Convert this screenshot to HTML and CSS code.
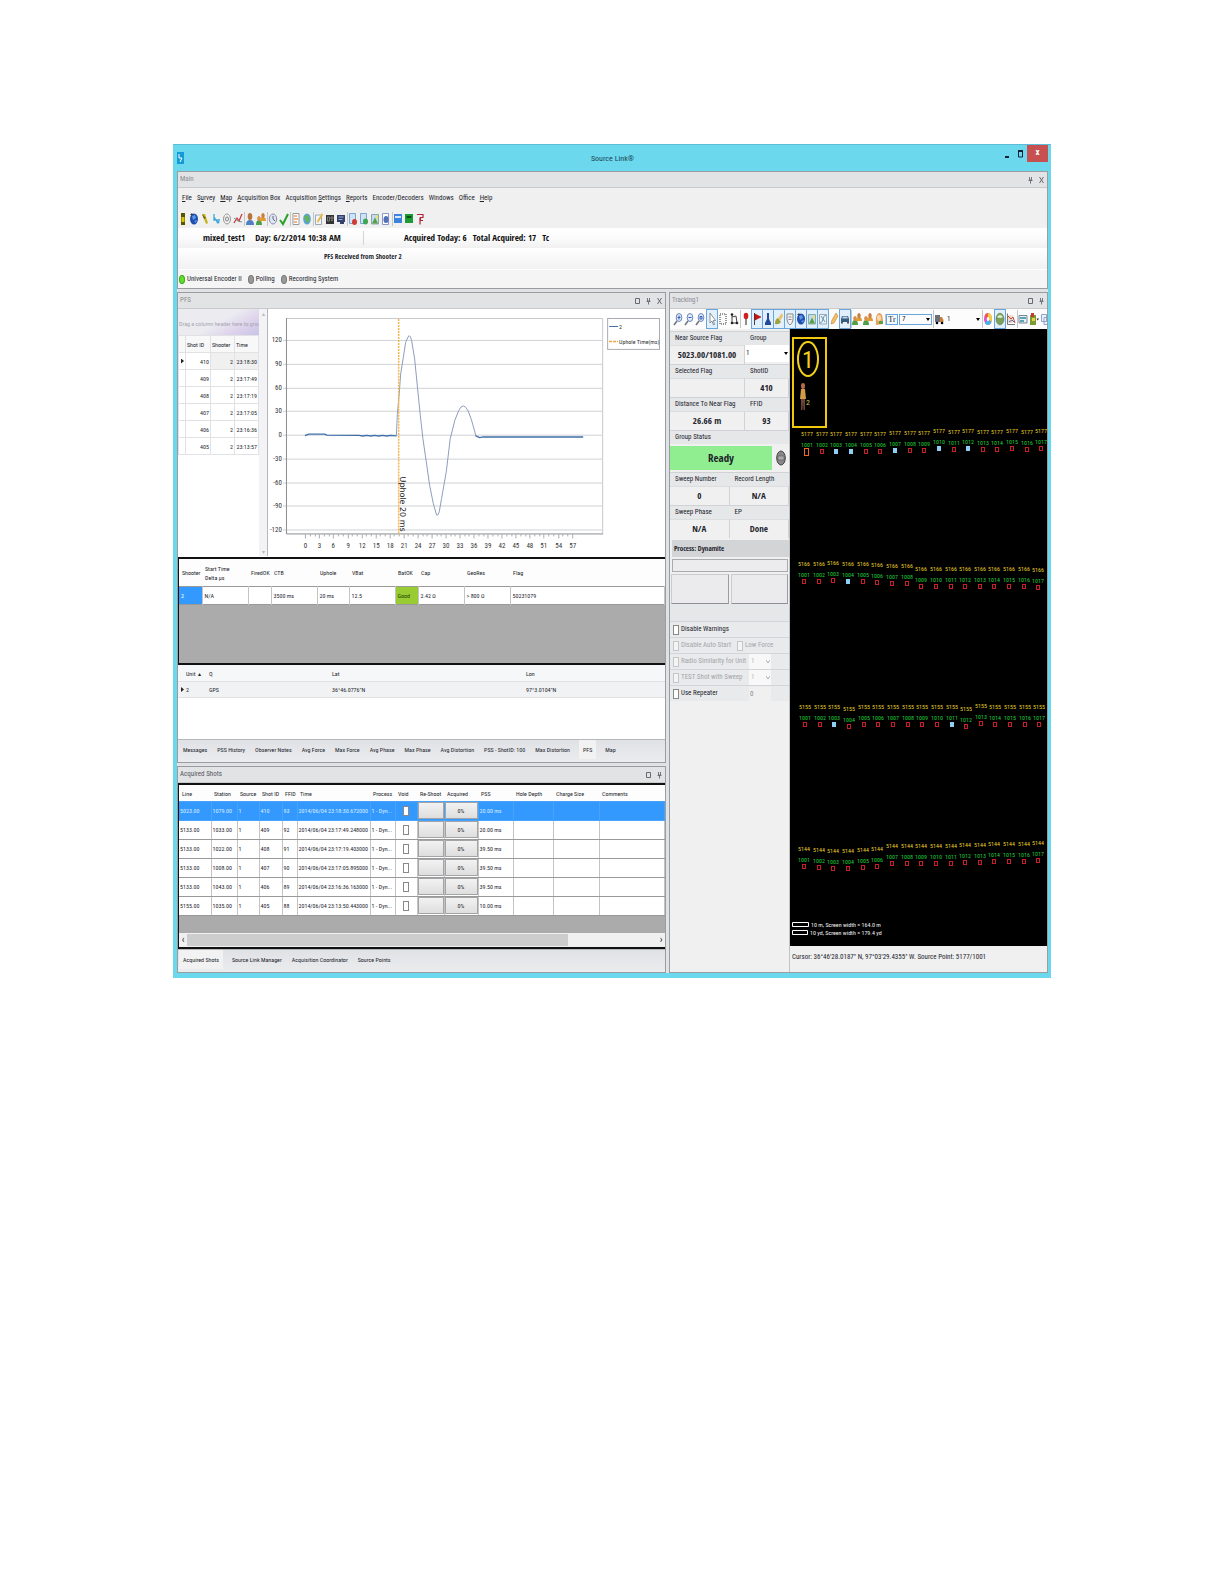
FILE: index.html
```html
<!DOCTYPE html>
<html lang="en">
<head>
<meta charset="utf-8">
<meta name="viewport" content="width=device-width, initial-scale=1">
<title>Source Link</title>
<link rel="stylesheet" href="styles.css">
</head>
<body>
<svg class="sprite" aria-hidden="true">
  <symbol id="c-max" viewBox="0 0 5 8"><path d="M.5 1.500h4v5h-4z" fill="none" stroke="#666a70"/></symbol>
  <symbol id="c-pin" viewBox="0 0 5 8"><path d="M1.500 1v3h2V1M.5 4.500h4M2.500 5v2.500" fill="none" stroke="#666a70" stroke-width=".9"/></symbol>
  <symbol id="c-x" viewBox="0 0 5 8"><path d="M.5 1l4 6M4.500 1l-4 6" fill="none" stroke="#666a70"/></symbol>
  <symbol id="i-battery" viewBox="0 0 10 14"><path d="M3 1h4v12H3z" fill="#5b5400"/><path d="M3.500 5h3v5h-3z" fill="#d8c400"/></symbol>
  <symbol id="i-globe" viewBox="0 0 10 14"><ellipse cx="5" cy="7" rx="4" ry="5.500" fill="#1f4fae"/><path d="M3 4l3-1 1 3-3 2zM5 9l3-1-1 3z" fill="#5f96e6"/><path d="M1 3l2-2 1 2z" fill="#333"/></symbol>
  <symbol id="i-marker" viewBox="0 0 10 14"><path d="M2 2l3 0 3 9-2 1z" fill="#c9b21a"/><path d="M2 2l2 5 2-1z" fill="#6b6414"/></symbol>
  <symbol id="i-route" viewBox="0 0 10 14"><path d="M3 2v6h6M3 5l4 6" fill="none" stroke="#3fa9dc" stroke-width="1.300"/><circle cx="7" cy="10" r="1.500" fill="#3fa9dc"/></symbol>
  <symbol id="i-gear" viewBox="0 0 10 14"><ellipse cx="5" cy="7" rx="3.500" ry="5" fill="#eee" stroke="#999"/><ellipse cx="5" cy="7" rx="1.500" ry="2" fill="none" stroke="#888"/></symbol>
  <symbol id="i-graph" viewBox="0 0 10 14"><path d="M1 11l3-5 2 3 3-7" fill="none" stroke="#c33" stroke-width="1.200"/><path d="M1 6l4 3 4 1" fill="none" stroke="#888"/></symbol>
  <symbol id="i-user" viewBox="0 0 10 14"><path d="M1 13q0-5 4-5t4 5z" fill="#4f7fc4"/><ellipse cx="5" cy="4.500" rx="2.300" ry="3.500" fill="#b9733c"/></symbol>
  <symbol id="i-users" viewBox="0 0 10 14"><path d="M0 13q0-5 3-5t3 5z" fill="#4ca04c"/><ellipse cx="3" cy="6.500" rx="1.800" ry="2.500" fill="#d88f4c"/><path d="M4 9q0-4 3-4t3 4z" fill="#e09b35"/><ellipse cx="7" cy="3.500" rx="1.700" ry="2.500" fill="#c97c3d"/></symbol>
  <symbol id="i-person" viewBox="0 0 10 14"><path d="M2 13q-1-11 3-12t4 11z" fill="#e6a15a"/><ellipse cx="5" cy="6" rx="2" ry="3" fill="#f6d9b4"/><path d="M5 9h4v3H5z" fill="#58a04c"/></symbol>
  <symbol id="i-clock" viewBox="0 0 10 14"><ellipse cx="5" cy="7" rx="3.700" ry="5" fill="#dfe3f2" stroke="#8a90ad"/><path d="M5 4v3l2 2" fill="none" stroke="#667"/></symbol>
  <symbol id="i-check" viewBox="0 0 10 14"><path d="M1 8l3 4 5-10" fill="none" stroke="#2aa02a" stroke-width="2"/></symbol>
  <symbol id="i-doc" viewBox="0 0 10 14"><path d="M2 1.500h6v11H2z" fill="#fff" stroke="#999"/><path d="M3 4h3M3 7h4M3 10h3" stroke="#d2691e"/></symbol>
  <symbol id="i-sphere" viewBox="0 0 10 14"><ellipse cx="5" cy="7" rx="3.800" ry="5.500" fill="#58a4d8"/><path d="M2 5q3-4 5 0t-2 6z" fill="#68b35a"/></symbol>
  <symbol id="i-edit" viewBox="0 0 10 14"><path d="M1.500 3h6v9.500h-6z" fill="#f4f6fb" stroke="#9ab"/><path d="M3 9l5-8 1 2-5 8z" fill="#e4b93c"/></symbol>
  <symbol id="i-dark" viewBox="0 0 10 14"><path d="M1 3h8v9H1z" fill="#333"/><path d="M2.500 5h2v4h-2zM6 5h2v2H6zM6 8.500h2" stroke="#aaa" stroke-width=".6" fill="none"/></symbol>
  <symbol id="i-screen" viewBox="0 0 10 14"><path d="M1 3h8v7H1zM4 10h4v2H4z" fill="#33406b"/><path d="M2.500 5h5M2.500 7.500h4" stroke="#9fb0dd"/></symbol>
  <symbol id="i-docred" viewBox="0 0 10 14"><path d="M1.500 1.500h6v10h-6z" fill="#cfe2f6" stroke="#7fa4cf"/><ellipse cx="6.500" cy="10" rx="2.500" ry="3" fill="#d33a34"/></symbol>
  <symbol id="i-docgreen" viewBox="0 0 10 14"><path d="M1.500 1.500h6v10h-6z" fill="#cfe2f6" stroke="#7fa4cf"/><ellipse cx="6.500" cy="9.500" rx="2.500" ry="3" fill="#3da554"/></symbol>
  <symbol id="i-picture" viewBox="0 0 10 14"><path d="M1.500 2.500h7v9.500h-7z" fill="#bcdcf2" stroke="#8aa"/><path d="M2 11.500l3-6 3 6z" fill="#5c9e46"/><path d="M6 3.500h2v3H6z" fill="#f4dc66"/></symbol>
  <symbol id="i-docblue" viewBox="0 0 10 14"><path d="M1.500 1.500h6v11h-6z" fill="#fff" stroke="#8b96c4"/><ellipse cx="5" cy="7.500" rx="2.500" ry="3.500" fill="#5370b8"/></symbol>
  <symbol id="i-cardblue" viewBox="0 0 10 14"><path d="M1 2h8v9H1z" fill="#3d82de"/><path d="M2 5h6" stroke="#d8e8ff" stroke-width="2"/></symbol>
  <symbol id="i-cardgreen" viewBox="0 0 10 14"><path d="M1 2h8v9H1z" fill="#1d9b35"/><path d="M2.500 5h5" stroke="#0a5318" stroke-width="2"/></symbol>
  <symbol id="i-pdf" viewBox="0 0 10 14"><path d="M2 2.500h6v3H5.500v3H8M5 5.500v7" fill="none" stroke="#b3243a" stroke-width="1.200"/></symbol>
  <symbol id="i-zoomin" viewBox="0 0 10 14"><ellipse cx="6" cy="5.500" rx="2.800" ry="4" fill="#e3ecfa" stroke="#6a86b8"/><path d="M4 9l-3 4" stroke="#6f7480" stroke-width="1.500"/><path d="M4.500 5.500h3M6 3.500v4" stroke="#2b5cb8"/></symbol>
  <symbol id="i-zoomout" viewBox="0 0 10 14"><ellipse cx="6" cy="5.500" rx="2.800" ry="4" fill="#e3ecfa" stroke="#6a86b8"/><path d="M4 9l-3 4" stroke="#6f7480" stroke-width="1.500"/><path d="M4.500 5.500h3" stroke="#2b5cb8"/></symbol>
  <symbol id="i-zoomfit" viewBox="0 0 10 14"><ellipse cx="6" cy="5.500" rx="2.800" ry="4" fill="#e3ecfa" stroke="#6a86b8"/><path d="M4 9l-3 4" stroke="#6f7480" stroke-width="1.500"/><path d="M5 4.500h2v2.500H5z" fill="none" stroke="#2b5cb8"/></symbol>
  <symbol id="i-cursor" viewBox="0 0 10 14"><path d="M3 1v10l2-2 1.500 4 1-.5-1.200-4H8.500z" fill="#fff" stroke="#777" stroke-width=".8"/></symbol>
  <symbol id="i-dashed" viewBox="0 0 10 14"><path d="M2 2h6v10H2z" fill="none" stroke="#333" stroke-dasharray="1 1"/></symbol>
  <symbol id="i-poly" viewBox="0 0 10 14"><path d="M3 2v9h5M3 5l4-1 1 7" fill="none" stroke="#444"/><circle cx="3" cy="2.500" r="1.300" fill="#222"/><circle cx="8" cy="11" r="1.300" fill="#222"/><circle cx="3" cy="11" r="1.300" fill="#222"/></symbol>
  <symbol id="i-pin" viewBox="0 0 10 14"><path d="M5 5v8" stroke="#555" stroke-width="1.300"/><ellipse cx="5" cy="4" rx="2.300" ry="3.200" fill="#c22"/></symbol>
  <symbol id="i-flag" viewBox="0 0 10 14"><path d="M2.500 1v12" stroke="#444"/><path d="M3 2l6 3-6 3z" fill="#d11" stroke="#700" stroke-width=".5"/></symbol>
  <symbol id="i-flask" viewBox="0 0 10 14"><path d="M4 1h2v6l2 4v2H2v-2l2-4z" fill="#24489c"/></symbol>
  <symbol id="i-brush" viewBox="0 0 10 14"><path d="M1 12q0-5 3-6l3 4q-2 3-6 2z" fill="#9fa23c"/><path d="M4 6l4-5 1 3-3 5z" fill="#e9c567"/></symbol>
  <symbol id="i-shield" viewBox="0 0 10 14"><path d="M2 2h6v6q-1 4-3 5-2-1-3-5z" fill="#f2f2f2" stroke="#888"/><path d="M3.500 5h3M3.500 7.500h3" stroke="#888"/></symbol>
  <symbol id="i-contour" viewBox="0 0 10 14"><path d="M1.500 2.500h7v9.500h-7z" fill="#e6f2f8" stroke="#9ab"/><path d="M2 11q3-1 3-4t3-4M3 4l4 6" fill="none" stroke="#6b96aa"/></symbol>
  <symbol id="i-pencil" viewBox="0 0 10 14"><path d="M2 12l1-4 4-7 2 3-4 7z" fill="#f3c066" stroke="#b88436" stroke-width=".6"/></symbol>
  <symbol id="i-car" viewBox="0 0 10 14"><path d="M1 7l1-3h6l1 3v3H1z" fill="#365a80"/><path d="M2.700 4.500h4.600l.5 2H2.200z" fill="#b9d3ea"/><path d="M2 10v1.500M8 10v1.500" stroke="#222" stroke-width="1.500"/></symbol>
  <symbol id="i-truck" viewBox="0 0 10 14"><path d="M1 3h5v7H1z" fill="#6b6f78"/><path d="M6 5h2l1.500 3v2H6z" fill="#c8803c"/><circle cx="3" cy="11" r="1.300"/><circle cx="8" cy="11" r="1.300"/></symbol>
  <symbol id="i-palette" viewBox="0 0 10 14"><ellipse cx="5" cy="7" rx="4" ry="6" fill="#e24fc4"/><path d="M5 7V1a4 6 0 0 1 3.500 9z" fill="#f4cd37"/><path d="M5 7l3.500 3A4 6 0 0 1 2 11z" fill="#44b6e6"/><path d="M5 7L1.500 4A4 6 0 0 1 5 1z" fill="#ef5a4f"/><ellipse cx="5" cy="7" rx="1.300" ry="2" fill="#fff"/></symbol>
  <symbol id="i-earth" viewBox="0 0 10 14"><ellipse cx="5" cy="7" rx="4" ry="5.800" fill="#7da05a" stroke="#55753c" stroke-width=".6"/><path d="M2 5q3-4 6 0-3 2-6 0z" fill="#dcebd0"/></symbol>
  <symbol id="i-chart" viewBox="0 0 10 14"><path d="M1.500 1.500v11h7.500" fill="none" stroke="#777"/><path d="M2 3h5v8H2z" fill="#f1dccb"/><path d="M2 4l3 3 2-2 2 6" fill="none" stroke="#c5483a"/><path d="M3 10l3-2 2 2" fill="none" stroke="#546db5"/></symbol>
  <symbol id="i-map" viewBox="0 0 10 14"><path d="M1 3.500h8v7.500H1z" fill="#e8f0f4" stroke="#789"/><path d="M2 6h6M2 9h4" stroke="#2c8a9c" stroke-width="1.500"/></symbol>
  <symbol id="i-toolbox" viewBox="0 0 10 14"><path d="M1 3h6v10H1z" fill="#7a9a35"/><path d="M2 1h3v4H2z" fill="#c93838"/><path d="M3 6h3v3H3z" fill="#e6d23f"/><path d="M7.500 6.500h2.500l-1.250 2z" fill="#222"/></symbol>
  <symbol id="i-copy" viewBox="0 0 10 14"><path d="M1.500 2.500h5v7h-5zM4 5.500h5v7H4z" fill="#edf3fc" stroke="#8aa3cf"/></symbol>
</svg>

<div class="window">
  <header class="titlebar">
    <svg class="app-icon" viewBox="0 0 7 12" aria-hidden="true"><path d="M0 0h7v12H0z" fill="#139bd6"/><path d="M2 2v4h3l-2 4" fill="none" stroke="#fff"/></svg>
    <h1>Source Link®</h1>
    <div class="win-buttons">
      <button type="button" aria-label="Minimize"><svg viewBox="0 0 5 8"><path d="M0 7h4" stroke="#123" stroke-width="2"/></svg></button>
      <button type="button" aria-label="Maximize"><svg viewBox="0 0 5 8"><path d="M.5 1v6h4V1" fill="none" stroke="#123"/><path d="M0 1h5" stroke="#123" stroke-width="2"/></svg></button>
      <button type="button" class="close" aria-label="Close">x</button>
    </div>
  </header>

  <section class="panel main-panel">
    <div class="caption muted"><h2>Main</h2><svg><use href="#c-pin"/></svg><svg><use href="#c-x"/></svg></div>
    <nav class="menu">
      <button type="button"><u>F</u>ile</button><button type="button">S<u>u</u>rvey</button><button type="button"><u>M</u>ap</button><button type="button"><u>A</u>cquisition Box</button><button type="button">Acquisition <u>S</u>ettings</button><button type="button"><u>R</u>eports</button><button type="button">Encoder/Decoders</button><button type="button">Windows</button><button type="button">Office</button><button type="button"><u>H</u>elp</button>
    </nav>
    <div class="toolbar">
      <div class="group"><svg><use href="#i-battery"/></svg><svg><use href="#i-globe"/></svg><svg><use href="#i-marker"/></svg><svg><use href="#i-route"/></svg><svg><use href="#i-gear"/></svg><svg><use href="#i-graph"/></svg></div>
      <div class="group"><svg><use href="#i-user"/></svg><svg><use href="#i-users"/></svg></div>
      <div class="group"><svg><use href="#i-clock"/></svg><svg><use href="#i-check"/></svg></div>
      <div class="group"><svg><use href="#i-doc"/></svg><svg><use href="#i-sphere"/></svg></div>
      <div class="group"><svg><use href="#i-edit"/></svg><svg><use href="#i-dark"/></svg><svg><use href="#i-screen"/></svg></div>
      <div class="group"><svg><use href="#i-docred"/></svg><svg><use href="#i-docgreen"/></svg><svg><use href="#i-picture"/></svg><svg><use href="#i-docblue"/></svg></div>
      <div class="group"><svg><use href="#i-cardblue"/></svg><svg><use href="#i-cardgreen"/></svg><svg><use href="#i-pdf"/></svg></div>
    </div>
    <div class="info">
      <div class="info-left"><span>mixed_test1</span><span>Day: 6/2/2014 10:38 AM</span></div>
      <div class="info-right"><span>Acquired Today: 6</span><span>Total Acquired: 17</span><span>Tc</span></div>
    </div>
    <div class="message">PFS Received from Shooter 2</div>
    <div class="leds"><span class="led on">Universal Encoder II</span><span class="led">Polling</span><span class="led">Recording System</span></div>
  </section>

  <div class="columns">
    <div class="left-col">
      <section class="panel">
        <div class="caption muted"><h2>PFS</h2><svg><use href="#c-max"/></svg><svg><use href="#c-pin"/></svg><svg><use href="#c-x"/></svg></div>
        <div class="pfs">
          <div class="shots">
            <div class="drag">Drag a column header here to group</div>
            <table class="shot-table">
              <colgroup><col class="c7"><col class="c25"><col class="c24"><col></colgroup>
              <thead><tr><th></th><th>Shot ID</th><th>Shooter</th><th>Time</th></tr></thead>
              <tbody>
                <tr class="current"><td><i class="row-mark"></i></td><td>410</td><td>2</td><td>23:18:30</td></tr>
                <tr><td></td><td>409</td><td>2</td><td>23:17:49</td></tr>
                <tr><td></td><td>408</td><td>2</td><td>23:17:19</td></tr>
                <tr><td></td><td>407</td><td>2</td><td>23:17:05</td></tr>
                <tr><td></td><td>406</td><td>2</td><td>23:16:36</td></tr>
                <tr><td></td><td>405</td><td>2</td><td>23:13:57</td></tr>
              </tbody>
            </table>
          </div>
          <div class="vscroll"><span>▴</span><span>▾</span></div>
          <svg class="chart" viewBox="0 0 398 248" role="img" aria-label="Uphole waveform">
            <g id="grid"></g>
            <path d="M18.500 9.500H335.500V225" fill="none" stroke="#c6c8ca"/>
            <path d="M18.500 9V225.500H336" fill="none" stroke="#8a8c90"/>
            <path d="M37 127l4-1.500 16 0 2 1 32 .2 4 .6 4-.6 4 .6 4-.6 4 .6 4-.6 4 .6 4-.6 6 .4M208 127l4 2 4-.7H316" fill="none" stroke="#3f6da8" stroke-width="1.300"/>
            <path d="M128.700 127l1-22 2-21.700 1.300-18.300 2.700-16.700 2.300-15 3-6.300q1.500-1 3 4.700l3 18.300 3 30 2.700 26.700 2.600 23.300 3.400 23.300 3.300 23.300 3.700 18.400 3.300 11.600q1.500 1 2.700-3.300l2.300-13.300 4.700-26.700 4-33.300 4.600-18.400 4-10q4.500-9.300 9.400 0.700l3.300 9 4.700 16.700" fill="none" stroke="#8d9dbc"/>
            <path d="M131 10v215" stroke="#f6b44c" stroke-dasharray="2 1" stroke-width="1.500"/>
            <text class="uphole" x="132" y="168" transform="rotate(90 132 168)">Uphole 20 ms</text>
            <rect x="340.500" y="9.500" width="52" height="31" fill="#fff" stroke="#a9abb0"/>
            <path d="M342 17.500h9" stroke="#3f6da8"/><path d="M342 32.500h9" stroke="#eda53b" stroke-width="1.500" stroke-dasharray="3 1"/>
            <text class="legend" x="352" y="20">2</text><text class="legend" x="352" y="35">Uphole Time(ms)</text>
          </svg>
        </div>
        <div class="grid-area">
          <table class="dark-head result">
            <colgroup><col class="c23"><col class="c46"><col class="c23"><col class="c46"><col class="c32"><col class="c46"><col class="c23"><col class="c46"><col class="c46"><col></colgroup>
            <thead><tr><th>Shooter</th><th>Start Time<br>Delta µs</th><th>FiredOK</th><th>CTB</th><th>Uphole</th><th>VBat</th><th>BatOK</th><th>Cap</th><th>GeoRes</th><th>Flag</th></tr></thead>
            <tbody><tr><td class="sel">2</td><td>N/A</td><td></td><td>3500 ms</td><td>20 ms</td><td>12.5</td><td class="good">Good</td><td>2.42 Ω</td><td>&gt; 800 Ω</td><td>50231079</td></tr></tbody>
          </table>
        </div>
        <div class="unit-area">
          <table class="unit">
            <colgroup><col class="c7"><col class="c23"><col class="c123"><col class="c194"><col></colgroup>
            <thead><tr><th></th><th>Unit &nbsp;▴</th><th>Q</th><th>Lat</th><th>Lon</th></tr></thead>
            <tbody><tr><td><i class="row-mark"></i></td><td>2</td><td>GPS</td><td>36°46.0776"N</td><td>97°3.0104"N</td></tr></tbody>
          </table>
        </div>
        <nav class="tabs">
          <button type="button">Messages</button><button type="button">PSS History</button><button type="button">Observer Notes</button><button type="button">Avg Force</button><button type="button">Max Force</button><button type="button">Avg Phase</button><button type="button">Max Phase</button><button type="button">Avg Distortion</button><button type="button">PSS - ShotID: 100</button><button type="button">Max Distortion</button><button type="button" class="active">PFS</button><button type="button">Map</button>
        </nav>
      </section>

      <section class="panel">
        <div class="caption"><h2>Acquired Shots</h2><svg><use href="#c-max"/></svg><svg><use href="#c-pin"/></svg></div>
        <div class="acq-area">
          <table class="dark-head acq">
            <colgroup><col class="c32"><col class="c26"><col class="c22"><col class="c23"><col class="c15"><col class="c73"><col class="c25"><col class="c22"><col class="c27"><col class="c34"><col class="c35"><col class="c40"><col class="c46"><col></colgroup>
            <thead><tr><th>Line</th><th>Station</th><th>Source</th><th>Shot ID</th><th>FFID</th><th>Time</th><th>Process</th><th>Void</th><th>Re-Shoot</th><th>Acquired</th><th>PSS</th><th>Hole Depth</th><th>Charge Size</th><th>Comments</th></tr></thead>
            <tbody>
              <tr class="sel"><td>5023.00</td><td>1079.00</td><td>1</td><td>410</td><td>93</td><td>2014/06/04 23:18:30.672000</td><td>1 - Dyn...</td><td><input type="checkbox" aria-label="Void 410"></td><td><button type="button" aria-label="Re-shoot 410"></button></td><td><button type="button">0%</button></td><td>20.00 ms</td><td></td><td></td><td></td></tr>
              <tr><td>5133.00</td><td>1033.00</td><td>1</td><td>409</td><td>92</td><td>2014/06/04 23:17:49.248000</td><td>1 - Dyn...</td><td><input type="checkbox" aria-label="Void 409"></td><td><button type="button" aria-label="Re-shoot 409"></button></td><td><button type="button">0%</button></td><td>20.00 ms</td><td></td><td></td><td></td></tr>
              <tr><td>5133.00</td><td>1022.00</td><td>1</td><td>408</td><td>91</td><td>2014/06/04 23:17:19.403000</td><td>1 - Dyn...</td><td><input type="checkbox" aria-label="Void 408"></td><td><button type="button" aria-label="Re-shoot 408"></button></td><td><button type="button">0%</button></td><td>39.50 ms</td><td></td><td></td><td></td></tr>
              <tr><td>5133.00</td><td>1008.00</td><td>1</td><td>407</td><td>90</td><td>2014/06/04 23:17:05.895000</td><td>1 - Dyn...</td><td><input type="checkbox" aria-label="Void 407"></td><td><button type="button" aria-label="Re-shoot 407"></button></td><td><button type="button">0%</button></td><td>39.50 ms</td><td></td><td></td><td></td></tr>
              <tr><td>5133.00</td><td>1043.00</td><td>1</td><td>406</td><td>89</td><td>2014/06/04 23:16:36.163000</td><td>1 - Dyn...</td><td><input type="checkbox" aria-label="Void 406"></td><td><button type="button" aria-label="Re-shoot 406"></button></td><td><button type="button">0%</button></td><td>39.50 ms</td><td></td><td></td><td></td></tr>
              <tr><td>5155.00</td><td>1035.00</td><td>1</td><td>405</td><td>88</td><td>2014/06/04 23:13:50.443000</td><td>1 - Dyn...</td><td><input type="checkbox" aria-label="Void 405"></td><td><button type="button" aria-label="Re-shoot 405"></button></td><td><button type="button">0%</button></td><td>10.00 ms</td><td></td><td></td><td></td></tr>
            </tbody>
          </table>
          <div class="hscroll"><span>‹</span><div class="track"><div class="thumb"></div></div><span>›</span></div>
        </div>
        <nav class="tabs lower">
          <button type="button" class="active">Acquired Shots</button><button type="button">Source Link Manager</button><button type="button">Acquisition Coordinator</button><button type="button">Source Points</button>
        </nav>
      </section>
    </div>

    <section class="panel tracking">
      <div class="caption muted"><h2>Tracking1</h2><svg><use href="#c-max"/></svg><svg><use href="#c-pin"/></svg></div>
      <div class="toolbar white">
        <div class="group"><svg><use href="#i-zoomin"/></svg><svg><use href="#i-zoomout"/></svg><svg><use href="#i-zoomfit"/></svg></div>
        <div class="group"><svg class="on"><use href="#i-cursor"/></svg><svg><use href="#i-dashed"/></svg><svg><use href="#i-poly"/></svg></div>
        <div class="group"><svg><use href="#i-pin"/></svg><svg class="on"><use href="#i-flag"/></svg><svg class="on"><use href="#i-flask"/></svg><svg class="on"><use href="#i-brush"/></svg><svg class="on"><use href="#i-shield"/></svg><svg class="on"><use href="#i-globe"/></svg><svg class="on"><use href="#i-picture"/></svg><svg class="on"><use href="#i-contour"/></svg><svg><use href="#i-pencil"/></svg><svg class="on"><use href="#i-car"/></svg></div>
        <div class="group"><svg><use href="#i-users"/></svg><svg><use href="#i-users"/></svg><svg><use href="#i-person"/></svg></div>
        <div class="group"><button type="button" class="font-btn">Tr</button><select class="font-size" aria-label="Font size"><option>7</option></select></div>
        <div class="group"><svg><use href="#i-truck"/></svg><select class="truck-no" aria-label="Truck"><option>1</option></select></div>
        <div class="group"><svg><use href="#i-palette"/></svg></div>
        <div class="group"><svg class="on"><use href="#i-earth"/></svg><svg><use href="#i-chart"/></svg></div>
        <div class="group"><svg><use href="#i-map"/></svg><svg><use href="#i-toolbox"/></svg><svg><use href="#i-copy"/></svg></div>
      </div>
      <div class="track-body">
        <form class="side">
          <div class="pair wide"><div class="lab">Near Source Flag</div><div class="lab">Group</div><output class="val">5023.00/1081.00</output><select class="group-select" aria-label="Group"><option>1</option></select></div>
          <div class="pair wide"><div class="lab">Selected Flag</div><div class="lab">ShotID</div><output class="val"></output><output class="val">410</output></div>
          <div class="pair wide"><div class="lab">Distance To Near Flag</div><div class="lab">FFID</div><output class="val">26.66 m</output><output class="val">93</output></div>
          <div class="lab">Group Status</div>
          <div class="ready-row"><output class="ready">Ready</output><svg viewBox="0 0 10 16" aria-hidden="true"><ellipse cx="5" cy="8" rx="4.300" ry="7" fill="#888" stroke="#444"/><path d="M2 6h6v4H2z" fill="#aaa" stroke="#555" stroke-width=".6"/></svg></div>
          <div class="pair even"><div class="lab">Sweep Number</div><div class="lab">Record Length</div><output class="val">0</output><output class="val">N/A</output></div>
          <div class="pair even"><div class="lab">Sweep Phase</div><div class="lab">EP</div><output class="val">N/A</output><output class="val">Done</output></div>
          <div class="process">Process: Dynamite</div>
          <div class="bar"></div>
          <div class="blank-buttons"><button type="button" aria-label="Start"></button><button type="button" aria-label="Stop"></button></div>
          <div class="spacer"></div>
          <div class="opt"><label><input type="checkbox">Disable Warnings</label></div>
          <div class="opt off"><label><input type="checkbox" disabled>Disable Auto Start</label><label><input type="checkbox" disabled>Low Force</label></div>
          <div class="opt off"><label><input type="checkbox" disabled>Radio Similarity for Unit</label><select disabled aria-label="Unit"><option>1</option></select></div>
          <div class="opt off"><label><input type="checkbox" disabled>TEST Shot with Sweep</label><select disabled aria-label="Sweep"><option>1</option></select></div>
          <div class="opt"><label><input type="checkbox">Use Repeater</label><input class="rep" type="text" value="0" disabled aria-label="Repeater"></div>
        </form>
        <div class="map-col">
          <svg class="map" viewBox="0 0 257 617" preserveAspectRatio="xMinYMin slice" role="img" aria-label="Source point map">
            <rect x="3" y="9" width="33" height="89" fill="none" stroke="#f2c80f" stroke-width="2"/>
            <ellipse cx="18" cy="30" rx="10" ry="17" fill="none" stroke="#f2d01c" stroke-width="2"/>
            <text class="big" x="18" y="39" text-anchor="middle">1</text>
            <ellipse cx="13" cy="57" rx="2" ry="3" fill="#b86a4c"/><path d="M11 60h4l1 10h-6z" fill="#d39b48"/><path d="M11 70h4v11h-1.500l-.5-9-.5 9H11z" fill="#6d4436"/>
            <text x="16" y="76" class="two">2</text>
            <g id="points"></g>
            <path d="M2.500 593.500h16v4h-16zM2.500 601.500h15v4h-15z" fill="none" stroke="#fff"/>
            <text class="scale" x="21" y="598">10 m, Screen width = 164.0 m</text><text class="scale" x="20" y="606">10 yd, Screen width = 179.4 yd</text>
          </svg>
          <div class="cursor">Cursor: 36°46'28.0187" N, 97°03'29.4355" W. Source Point: 5177/1001</div>
        </div>
      </div>
    </section>
  </div>
</div>
<script src="script.js"></script>
</body>
</html>
```
FILE: styles.css
```css
*, *::before { box-sizing: border-box; }
body { margin: 0; padding: 144px 173px; background: #fff; color: #22242c; font: 7px/9px "Roboto Condensed", "Liberation Sans", sans-serif; }
h1, h2 { margin: 0; font-size: inherit; font-weight: 400; }
button, input, select { font: inherit; color: inherit; margin: 0; padding: 0; border: 0; background: none; border-radius: 0; appearance: none; }
table { border-collapse: collapse; table-layout: fixed; width: 100%; }
th, td { font-weight: 400; text-align: left; padding: 0 0 0 2px; white-space: nowrap; }
.sprite { position: absolute; width: 0; height: 0; }

/* Column widths */
.c7 { width: 7px; }
.c15 { width: 15px; }
.c22 { width: 22px; }
.c23 { width: 23px; }
.c24 { width: 24px; }
.c25 { width: 25px; }
.c26 { width: 26px; }
.c27 { width: 27px; }
.c32 { width: 32px; }
.c34 { width: 34px; }
.c35 { width: 35px; }
.c40 { width: 40px; }
.c46 { width: 46px; }
.c73 { width: 73px; }
.c123 { width: 123px; }
.c194 { width: 194px; }

.window { background: #6bd8ee; padding: 0 3px 5px 4px; border: 1px solid #5bbdd8; border-width: 1px 0 0; }
.titlebar { display: grid; grid-template-columns: 1fr auto 1fr; align-items: center; height: 26px; }
.titlebar h1 { font-size: 8px; color: #1d4656; }
.app-icon { width: 7px; height: 12px; }
.win-buttons { display: flex; justify-content: flex-end; align-items: center; align-self: start; height: 17px; }
.win-buttons button { width: 13px; height: 17px; padding-top: 3px; }
.win-buttons svg { width: 5px; height: 8px; }
.win-buttons .close { width: 21px; padding: 0 0 2px; background: #c75050; color: #fff; font-weight: 700; font-size: 9px; }

.panel { background: #f0f0f0; border: 1px solid #9a9ca0; min-width: 0; }
.caption { display: flex; align-items: center; gap: 6px; height: 16px; padding: 0 3px 0 2px; background: #e2e3e5; border-bottom: 1px solid #c8cacc; color: #55575e; }
.caption h2 { flex: 1; }
.caption svg { width: 5px; height: 8px; }
.muted h2 { color: #8b8d93; }
.menu { display: flex; align-items: center; gap: 3px; height: 21px; padding-left: 3px; }
.menu button { padding: 0 1px; }
.toolbar { display: flex; align-items: center; gap: 1px; height: 19px; }
.group { display: flex; gap: 1px; border-left: 1px solid #c4c6ca; }
.group:first-child { border-left: 0; }
.group svg { width: 10px; height: 14px; flex: none; }
.info { display: grid; grid-template-columns: 186px 1fr; align-items: center; height: 20px; background: linear-gradient(#fff, #fbfbfb, #f1f1f1); font: 700 9px/14px "Open Sans Condensed", "Roboto Condensed", sans-serif; color: #101010; }
.info-left { display: flex; gap: 10px; padding-left: 25px; border-right: 1px solid #d4d4d4; }
.info-right { display: flex; gap: 6px; padding-left: 40px; }
.message { height: 22px; padding: 4px 0 0 146px; background: linear-gradient(#fff, #f1f1f1); font: 700 7px/10px "Open Sans Condensed", "Roboto Condensed", sans-serif; border-bottom: 1px solid #fff; }
.leds { display: flex; align-items: center; gap: 6px; height: 18px; padding-left: 1px; background: #f5f5f5; }
.led { display: flex; align-items: center; gap: 2px; }
.led::before { content: ""; width: 6px; height: 9px; border-radius: 50%; border: 1px solid #777; background: #999; }
.led.on::before { background: #5fe02d; border-color: #3da81c; }

.columns { display: grid; grid-template-columns: minmax(0, 489fr) minmax(0, 379fr); gap: 3px; padding-top: 3px; background: #dfe3e6; }
.left-col { display: flex; flex-direction: column; gap: 3px; min-width: 0; }
.pfs { display: grid; grid-template-columns: 81px 9px minmax(0, 1fr); background: #fff; padding-bottom: 1px; }
.drag { height: 26px; padding: 10px 0 0 1px; white-space: nowrap; font-size: 6px; color: #aaa7b3; background: linear-gradient(150deg, #ebebf0 50%, #ded3ec 75%, #c9c3e6); }
.shot-table { font-size: 6px; }
.shot-table tr { height: 17px; }
.shot-table th { background: #f8f8f9; border: 1px solid #e0e2e4; padding-left: 1px; }
.shot-table td { border: 1px solid #e0e2e4; text-align: right; padding: 0 1px 0 0; }
.shot-table .current td:nth-child(n+3) { background: #f0f0f1; }
.row-mark { display: block; width: 3px; height: 5px; margin-left: 2px; background: #222; clip-path: polygon(0 0, 100% 50%, 0 100%); }
.vscroll { display: flex; flex-direction: column; justify-content: space-between; align-items: center; background: #f3f3f6; border-right: 1px solid #b5b7bb; color: #b5b7bb; font-size: 6px; }
.chart { display: block; width: 100%; font-size: 7px; fill: #333; }
.chart .uphole { font: 8px "DejaVu Sans", sans-serif; fill: #222; }
.chart .legend { font-size: 6px; }
.grid-area { height: 108px; background: #ababab; border: 1px solid #111; border-width: 2px 0 2px 1px; }
.dark-head th { background: #fdfdfd; padding-left: 3px; font-size: 6px; line-height: 9px; }
.result thead tr { height: 27px; border-bottom: 1px solid #999; }
.result tbody tr { height: 18px; background: #fff; border-bottom: 1px solid #999; }
.result td { border-right: 1px solid #c2c4c6; font-size: 6px; }
.result .sel { background: #3399ff; color: #fff; }
.result .good { background: #99cc33; color: #254200; }
.unit-area { height: 74px; background: #fff; }
.unit tr { height: 16px; }
.unit th { background: #f6f7f8; border-bottom: 1px solid #e0e2e4; }
.unit td { background: #f1f2f3; border-bottom: 1px solid #dfe1e3; }
.unit th, .unit td { padding-left: 1px; font-size: 6px; }
.tabs { display: flex; align-items: center; gap: 8px; height: 23px; padding: 0 4px; background: linear-gradient(#dfe1e5, #ebecee); border-top: 1px solid #b5b7ba; white-space: nowrap; font-size: 6px; }
.tabs button { height: 19px; align-self: start; padding: 0 1px; }
.tabs .active { background: #f2f2f3; padding: 0 4px; }
.lower { padding-left: 1px; }

.acq-area { background: #ababab; border: 1px solid #111; border-width: 2px 0 2px 1px; }
.acq thead tr { height: 16px; }
.acq tbody tr { height: 19px; background: #fff; }
.acq td { padding-left: 1px; border: 1px solid #c2c4c6; border-width: 1px 1px 1px 0; border-bottom-color: #999; font-size: 6px; }
.acq .sel td { background: #3399ff; color: #dcecff; border-color: #4aa3fb; }
.acq td:nth-child(8) { text-align: center; padding: 0; }
.acq td:nth-child(9), .acq td:nth-child(10) { padding: 0; }
.acq td button { display: block; width: 100%; height: 17px; background: linear-gradient(#f2f2f2, #dedede); border: 1px solid #a2a4a6; color: #222; }
input[type="checkbox"] { width: 6px; height: 10px; background: #fff; border: 1px solid #888; vertical-align: middle; }
.hscroll { display: grid; grid-template-columns: 8px 1fr 8px; margin-top: 17px; height: 14px; background: #f0f0f0; align-items: center; text-align: center; font-size: 10px; }
.track { height: 12px; }
.thumb { width: 81%; height: 12px; background: #cdcdcd; }

.tracking { display: flex; flex-direction: column; }
.white { height: 20px; background: #fcfcfc; padding-left: 3px; overflow: hidden; }
.white svg { height: 18px; padding: 1px 0; }
.white .on { background: #e2effc; box-shadow: 0 0 0 1px #6aa6de; }
.font-btn { width: 12px; border: 1px solid #6aa6de; background: #f0f7fe; font: 8px "Liberation Serif", serif; }
select { background: url("data:image/svg+xml,%3Csvg xmlns='http://www.w3.org/2000/svg' viewBox='0 0 4 3'%3E%3Cpath d='M0 0h4L2 3z'/%3E%3C/svg%3E") no-repeat right 1px center/4px 3px; }
.font-size { width: 33px; padding-left: 2px; border: 1px solid #6aa6de; }
.truck-no { width: 36px; padding-left: 2px; }
.track-body { display: grid; grid-template-columns: 120px minmax(0, 1fr); flex: 1; }
.side { padding-top: 2px; background: #f0f0f1; border-right: 1px solid #c0c2c5; }
.pair { display: grid; }
.wide { grid-template-columns: 75px 1fr; }
.even { grid-template-columns: 1fr 1fr; }
.lab { display: flex; align-items: center; height: 14px; padding-left: 5px; background: #e6e7e9; border-top: 1px solid #d0d2d5; white-space: nowrap; }
.val { display: flex; align-items: center; justify-content: center; height: 19px; font: 700 9px/14px "Open Sans Condensed", "Roboto Condensed", sans-serif; border-right: 1px solid #d0d2d5; border-top: 1px solid #dcdddf; }
.group-select { background-color: #fff; height: 17px; padding-left: 1px; }
.ready-row { display: grid; grid-template-columns: 1fr 17px; align-items: center; justify-items: center; height: 24px; margin: 2px 0; }
.ready { display: flex; align-items: center; justify-content: center; width: 100%; height: 24px; background: #90ee90; font: 700 11px/16px "Open Sans Condensed", "Roboto Condensed", sans-serif; }
.ready-row svg { width: 10px; height: 16px; }
.process { height: 17px; padding: 3px 2px; margin: 2px 0 0 2px; background: #d3d4d6; font: 700 7px/11px "Open Sans Condensed", "Roboto Condensed", sans-serif; }
.bar { height: 13px; margin: 2px 1px 2px 2px; background: #ececee; border: 1px solid #a9abae; }
.blank-buttons { display: grid; grid-template-columns: 1fr 1fr; gap: 2px; height: 30px; margin: 0 1px; }
.blank-buttons button { background: #ebebed; border: 1px solid #c9cbce; border-bottom-color: #8d8f93; border-right-color: #9a9ca0; }
.spacer { height: 17px; background: #e6e7e9; }
.opt { display: grid; grid-template-columns: 1fr 22px 18px; align-items: center; height: 16px; padding-left: 3px; border-top: 1px solid #d3d5d8; background: #e9eaec; }
.opt label { display: flex; align-items: center; gap: 2px; white-space: nowrap; }
.opt label:nth-child(2) { grid-column: 2 / 4; margin-left: -12px; }
.off { color: #a4a6ab; }
.off input { border-color: #c4c6c9; background: #f4f4f5; }
.opt select { height: 15px; padding-left: 2px; background: #fff url("data:image/svg+xml,%3Csvg xmlns='http://www.w3.org/2000/svg' viewBox='0 0 4 3'%3E%3Cpath d='M0 0l2 3 2-3' fill='none' stroke='%23999'/%3E%3C/svg%3E") no-repeat right 1px center/4px 3px; }
.rep { width: 22px; height: 14px; padding-left: 1px; background: #f0f0f0; color: #888; }
.map-col { display: flex; flex-direction: column; background: #f0f0f0; min-width: 0; }
.map { display: block; width: 100%; background: #000; font-size: 6px; }
.map .line { fill: #e8d02a; }
.map .station { fill: #1fd43a; }
.map .big { font-size: 24px; fill: #f2d01c; }
.map .two { font-size: 8px; fill: #d6c84a; }
.map .scale { fill: #f4f4f4; }
.cursor { padding: 6px 0 10px 2px; line-height: 10px; white-space: nowrap; }
```
FILE: script.js
```js
const NS = "http://www.w3.org/2000/svg";
function add(parent, tag, attrs, text) {
  const el = document.createElementNS(NS, tag);
  for (const k in attrs) el.setAttribute(k, attrs[k]);
  if (text !== undefined) el.textContent = text;
  parent.appendChild(el);
}

// Chart axes
const grid = document.getElementById("grid");
for (let i = 0; i < 9; i++) {
  const y = Math.round(31.3 + i * 23.7) + 0.5;
  add(grid, "path", { d: `M15 ${y}H335`, stroke: "#cfd1d4" });
  add(grid, "text", { x: 14, y: y + 2, "text-anchor": "end" }, String(120 - i * 30));
}
for (let i = 0; i < 58; i++) {
  const x = Math.round(37.3 + i * 4.69) + 0.5;
  add(grid, "path", { d: `M${x} 226v${i % 3 ? 2 : 4}`, stroke: "#a9abae" });
  if (i % 3 === 0) add(grid, "text", { x: x, y: 240, "text-anchor": "middle" }, String(i));
}

// Survey lines: label height per station, and the stations already shot
const lines = [
  { name: "5177", x: 17, y: [105,105,105,105,105,105,104,104,104,102,103,102,103,103,102,103,102], done: [2, 3, 6, 9, 11] },
  { name: "5166", x: 14, y: [235,235,234,235,235,236,237,237,240,240,240,240,240,240,240,240,241], done: [3] },
  { name: "5155", x: 15, y: [378,378,378,380,378,378,378,378,378,378,378,380,377,378,378,378,378], done: [2, 10] },
  { name: "5144", x: 14, y: [520,521,522,522,521,520,517,517,517,517,517,516,516,515,515,515,514], done: [] }
];
const points = document.getElementById("points");
for (const line of lines) {
  line.y.forEach((y, i) => {
    const x = Math.round(line.x + i * 14.65);
    add(points, "text", { class: "line", x: x, y: y + 2, "text-anchor": "middle" }, line.name);
    add(points, "text", { class: "station", x: x, y: y + 13, "text-anchor": "middle" }, String(1001 + i));
    if (line.done.includes(i)) add(points, "rect", { x: x - 2, y: y + 15, width: 4, height: 5, fill: "#8fd0f2" });
    else if (line.name === "5177" && i === 0) add(points, "rect", { x: x - 2.5, y: y + 14.5, width: 4, height: 7, fill: "none", stroke: "#f0642d" });
    else add(points, "rect", { x: x - 1.5, y: y + 15.5, width: 3, height: 4, fill: "none", stroke: "#c81e28" });
  });
}
```
